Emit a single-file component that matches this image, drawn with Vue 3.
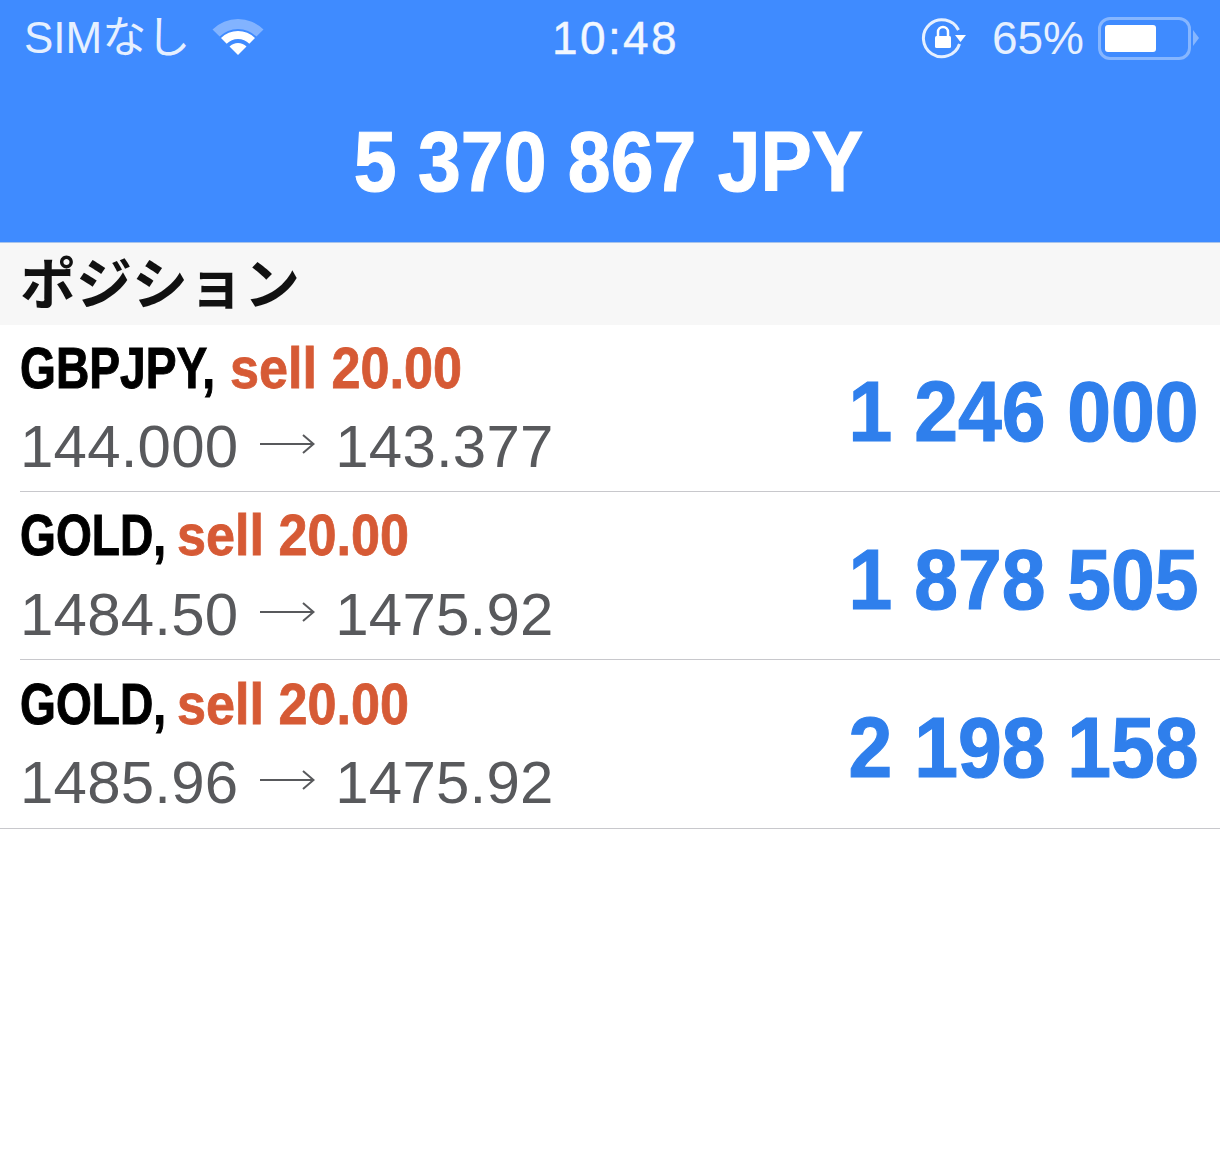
<script setup>
const rows = [
  { name: 'GBPJPY,', nameWidth: 210, from: '144.000', to: '143.377', profit: '1 246 000' },
  { name: 'GOLD,', nameWidth: 157, from: '1484.50', to: '1475.92', profit: '1 878 505' },
  { name: 'GOLD,', nameWidth: 157, from: '1485.96', to: '1475.92', profit: '2 198 158' },
]
</script>

<template>
  <div class="screen">
    <header class="top">
      <div class="status">
        <div class="status-left">
          <span class="carrier">SIMなし</span>
          <svg class="wifi" width="56" height="40" viewBox="0 0 56 40">
            <path d="M2.5 13.5 A36 36 0 0 1 53.5 13.5 L46.4 20.6 A26 26 0 0 0 9.6 20.6 Z" fill="#ffffff" opacity="0.35" />
            <path d="M11 22 A24 24 0 0 1 45 22 L39.3 27.7 A16 16 0 0 0 16.7 27.7 Z" fill="#ffffff" />
            <path d="M19.5 30.5 A12 12 0 0 1 36.5 30.5 L28 39 Z" fill="#ffffff" />
          </svg>
        </div>
        <div class="time">10:48</div>
        <div class="status-right">
          <svg class="lock" width="46" height="44" viewBox="0 0 46 44">
            <path d="M38.5 28 A18.5 18.5 0 1 1 37.5 14" fill="none" stroke="#e6f0ff" stroke-width="3" />
            <path d="M34 19 H45 L39.5 26 Z" fill="#ffffff" />
            <rect x="14" y="20" width="16" height="12" rx="1.5" fill="#ffffff" />
            <path d="M17 20 V16 A5 5 0 0 1 27 16 V20" fill="none" stroke="#ffffff" stroke-width="2.5" />
          </svg>
          <span class="percent">65%</span>
          <div class="battery">
            <div class="battery-body"><div class="battery-fill"></div></div>
            <div class="battery-tip"></div>
          </div>
        </div>
      </div>
      <div class="balance"><span>5 370 867 JPY</span></div>
    </header>

    <div class="section">ポジション</div>

    <div v-for="(row, i) in rows" :key="i" class="row">
      <div class="row-left">
        <div class="title">
          <span class="name" :style="{ width: row.nameWidth + 'px' }">{{ row.name }}</span>
          <span class="order">sell 20.00</span>
        </div>
        <div class="prices">
          <span>{{ row.from }}</span>
          <svg class="arrow" width="55" height="24" viewBox="0 0 55 24">
            <path d="M0 12 H53 M43 3 L53.5 12 L43 21" fill="none" stroke="#58595c" stroke-width="2" />
          </svg>
          <span>{{ row.to }}</span>
        </div>
      </div>
      <div class="profit"><span>{{ row.profit }}</span></div>
    </div>
  </div>
</template>

<style>
html, body {
  margin: 0;
  background: #ffffff;
}
</style>

<style scoped>
.screen {
  width: 1220px;
  height: 1174px;
  overflow: hidden;
  background: #ffffff;
  font-family: "Liberation Sans", "Noto Sans CJK JP", sans-serif;
}

.top {
  height: 242px;
  background: #3f8bff;
  border-bottom: 1px solid #a9c4ea;
}

.status {
  height: 76px;
  display: grid;
  grid-template-columns: 1fr auto 1fr;
  align-items: center;
  padding: 0 21px 0 24px;
  color: #e6f0ff;
  font-size: 46px;
}

.status-left {
  display: flex;
  align-items: center;
  gap: 20px;
}

.carrier {
  font-size: 44px;
  margin-top: -8px;
}

.wifi {
  margin-top: -4px;
}

.time {
  font-size: 46px;
  letter-spacing: 2.4px;
  margin-left: 8px;
  color: #f2f7ff;
  -webkit-text-stroke: 0.4px #f2f7ff;
}

.status-right {
  display: flex;
  align-items: center;
  justify-content: flex-end;
  gap: 25px;
}

.percent {
  margin-right: -11px;
}

.battery {
  display: flex;
  align-items: center;
  gap: 2px;
}

.battery-body {
  width: 93px;
  height: 43px;
  padding: 5px 4px;
  box-sizing: border-box;
  border: 3px solid #86b6ff;
  border-radius: 12px;
}

.battery-fill {
  width: 51px;
  height: 100%;
  background: #ffffff;
  border-radius: 3px;
}

.battery-tip {
  width: 0;
  height: 0;
  border-top: 8px solid transparent;
  border-bottom: 8px solid transparent;
  border-left: 6px solid #86b6ff;
}

.balance {
  height: 166px;
  display: flex;
  align-items: center;
  justify-content: center;
  padding-right: 2px;
  padding-top: 5px;
  box-sizing: border-box;
  color: #ffffff;
  font-size: 86px;
  font-weight: 700;
  white-space: nowrap;
  -webkit-text-stroke: 1.2px #ffffff;
}

.balance span {
  display: inline-block;
  transform: scaleX(0.895);
}

.section {
  height: 82px;
  padding-left: 20px;
  background: #f7f7f7;
  color: #111111;
  font-size: 56px;
  font-weight: 700;
  line-height: 84px;
}

.row {
  position: relative;
  height: 168px;
  box-sizing: border-box;
  display: flex;
  justify-content: space-between;
  align-items: center;
  padding: 0 21px 0 20px;
}

.section + .row {
  height: 167px;
}

.row:last-child {
  height: 169px;
}

.row::after {
  content: "";
  position: absolute;
  left: 20px;
  right: 0;
  bottom: 0;
  height: 1px;
  background: #c8c8cc;
}

.row:last-child::after {
  left: 0;
}

.title {
  display: flex;
  height: 79px;
  line-height: 79px;
  font-size: 57px;
  font-weight: 700;
  white-space: nowrap;
  margin-top: -3px;
}

.name {
  display: inline-block;
  color: #000000;
  transform: scaleX(0.81);
  transform-origin: left center;
  -webkit-text-stroke: 1px #000000;
}

.order {
  display: inline-block;
  color: #d65a35;
  transform: scaleX(0.915);
  transform-origin: left center;
  -webkit-text-stroke: 0.8px #d65a35;
}

.prices {
  display: flex;
  align-items: center;
  height: 78px;
  font-size: 60px;
  letter-spacing: 0.2px;
  color: #58595c;
  white-space: nowrap;
}

.arrow {
  margin: -5px 20px 0 22px;
}

.profit {
  color: #2f7fec;
  font-size: 86px;
  font-weight: 700;
  white-space: nowrap;
  margin-top: 6px;
  -webkit-text-stroke: 1.2px #2f7fec;
}

.profit span {
  display: inline-block;
  transform: scaleX(0.915);
  transform-origin: right center;
}
</style>
